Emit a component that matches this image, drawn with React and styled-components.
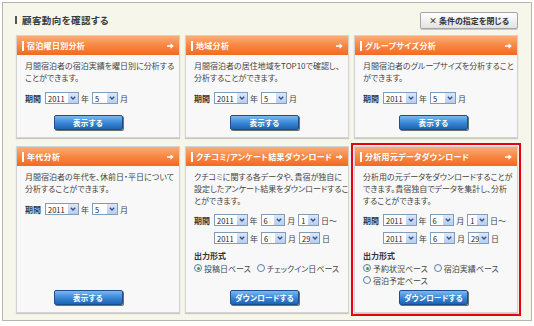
import React from 'react';
import styled, { createGlobalStyle } from 'styled-components';

const Global = createGlobalStyle`
  html, body { margin: 0; padding: 0; background: #ffffff; }
  body {
    font-family: "Noto Sans CJK JP", "Noto Sans", sans-serif;
    color: #333333;
    font-feature-settings: "palt";
  }
`;

const Panel = styled.div`
  box-sizing: border-box;
  margin: 2px;
  width: 530px;
  height: 319px;
  border: 1px solid #b5b5ab;
  background: #f6f6ea;
  padding: 9px 13px 6px 13px;
  display: flex;
  flex-direction: column;
`;

const TopBar = styled.div`
  height: 16px;
  display: flex;
  align-items: center;
  justify-content: space-between;
`;

const Title = styled.h1`
  margin: 0 0 0 -1px;
  display: flex;
  align-items: center;
  gap: 5px;
  font-size: 9.5px;
  font-weight: bold;
  color: #3a3a3a;
  letter-spacing: 0.4px;
  &::before {
    content: "";
    width: 2px;
    height: 8px;
    background: #555555;
  }
`;

const CloseButton = styled.button`
  box-sizing: border-box;
  height: 17px;
  width: 98px;
  padding: 0;
  border: 1px solid #a4a4a4;
  border-radius: 2px;
  background: linear-gradient(#ffffff, #e2e2e2);
  box-shadow: 0 1px 0 #c8c8c8;
  font-family: inherit;
  font-feature-settings: "palt";
  font-size: 8px;
  font-weight: bold;
  color: #333333;
  display: flex;
  align-items: center;
  justify-content: center;
  gap: 2px;
`;

const Grid = styled.div`
  margin-top: 7px;
  display: grid;
  grid-template-columns: 164px 164px 164px;
  grid-template-rows: 103px 167px;
  column-gap: 5px;
  row-gap: 8px;
`;

const Card = styled.section`
  box-sizing: border-box;
  border: 1px solid #d3d3d3;
  background: #f8f8f8;
  box-shadow: 0 1px 1px rgba(0, 0, 0, 0.18);
  display: flex;
  flex-direction: column;
  min-height: 0;
  ${p => p.$highlight && `
    outline: 2px solid #e60012;
    outline-offset: 1px;
  `}
`;

const CardHeader = styled.header`
  height: 19px;
  flex: none;
  display: flex;
  align-items: center;
  padding: 0 5px 0 5px;
  background: linear-gradient(#fbae78 0%, #f78b48 45%, #f26a20 100%);
  color: #ffffff;
  font-size: 8px;
  font-weight: bold;
  letter-spacing: 0.3px;
  &::before {
    content: "";
    width: 2px;
    height: 10px;
    background: #ffffff;
    margin-right: 3px;
  }
`;

const HeaderText = styled.span`
  flex: 1;
  white-space: nowrap;
`;

const CardBody = styled.div`
  flex: 1;
  display: flex;
  flex-direction: column;
  padding: 5px 8px 7px 8px;
  min-height: 0;
`;

const Desc = styled.p`
  margin: 0;
  font-size: 8px;
  line-height: 12px;
  color: #444444;
  white-space: nowrap;
`;

const PeriodRow = styled.div`
  display: flex;
  align-items: center;
  height: 12px;
  margin-top: ${p => p.$mt}px;
  padding-left: ${p => (p.$indent ? 20 : 0)}px;
  font-size: 8px;
  color: #444444;
  white-space: nowrap;
`;

const PeriodLabel = styled.span`
  width: 16px;
  margin-right: 4px;
  font-weight: bold;
  color: #333333;
`;

const SelectBox = styled.span`
  box-sizing: border-box;
  width: ${p => p.$w}px;
  height: 12px;
  border: 1px solid #7f9db9;
  background: #ffffff;
  display: flex;
  align-items: center;
  font-size: 7.5px;
  color: #222222;
`;

const SelectValue = styled.span`
  flex: 1;
  padding-left: 2px;
`;

const SelectArrow = styled.span`
  width: 10px;
  height: 10px;
  background: linear-gradient(#dbe6fa, #b9cdf1);
  display: flex;
  align-items: center;
  justify-content: center;
`;

const Unit = styled.span`
  margin: 0 3px 0 2px;
`;

const SubTitle = styled.div`
  margin-top: 6px;
  font-size: 8px;
  line-height: 12px;
  font-weight: bold;
  color: #333333;
`;

const RadioLine = styled.div`
  display: flex;
  align-items: center;
  gap: 6px;
  height: 12px;
  font-size: 8px;
  color: #444444;
  white-space: nowrap;
`;

const RadioItem = styled.span`
  display: flex;
  align-items: center;
  gap: 2px;
`;

const RadioCircle = styled.span`
  box-sizing: border-box;
  width: 8px;
  height: 8px;
  border-radius: 50%;
  border: 1px solid #5f7fa6;
  background: linear-gradient(#e8ecf2, #ffffff);
  display: flex;
  align-items: center;
  justify-content: center;
  &::after {
    content: "";
    width: 3px;
    height: 3px;
    border-radius: 50%;
    background: ${p => (p.$checked ? '#3f9b36' : 'transparent')};
  }
`;

const ActionButton = styled.button`
  box-sizing: border-box;
  margin-top: auto;
  align-self: center;
  margin-right: ${p => p.$shift}px;
  width: 69px;
  height: 15px;
  padding: 0;
  border: 1px solid #1d4f8c;
  border-radius: 2px;
  background: linear-gradient(#7bb9ee 0%, #3d8ad6 50%, #1c63b6 100%);
  box-shadow: 1px 1px 0 #6f6f6f;
  color: #ffffff;
  font-family: inherit;
  font-feature-settings: "palt";
  font-size: 7.5px;
  font-weight: bold;
  letter-spacing: 0.3px;
`;

const HeadArrow = () => (
  <svg width="7" height="6" viewBox="0 0 7 6">
    <path d="M0 2.2 H3.5 V0.3 L6.8 3 L3.5 5.7 V3.8 H0 Z" fill="#ffffff" />
  </svg>
);

const Chevron = () => (
  <svg width="6" height="4" viewBox="0 0 6 4">
    <path d="M0.8 0.8 L3 3 L5.2 0.8" fill="none" stroke="#2f4f86" strokeWidth="1.3" />
  </svg>
);

const Select = ({ value, w }) => (
  <SelectBox $w={w}>
    <SelectValue>{value}</SelectValue>
    <SelectArrow><Chevron /></SelectArrow>
  </SelectBox>
);

const MonthRow = ({ mt }) => (
  <PeriodRow $mt={mt}>
    <PeriodLabel>期間</PeriodLabel>
    <Select value="2011" w={34} />
    <Unit>年</Unit>
    <Select value="5" w={26} />
    <Unit>月</Unit>
  </PeriodRow>
);

const RangeRows = () => (
  <>
    <PeriodRow $mt={7}>
      <PeriodLabel>期間</PeriodLabel>
      <Select value="2011" w={34} />
      <Unit>年</Unit>
      <Select value="6" w={25} />
      <Unit>月</Unit>
      <Select value="1" w={21} />
      <Unit>日〜</Unit>
    </PeriodRow>
    <PeriodRow $mt={6} $indent>
      <Select value="2011" w={34} />
      <Unit>年</Unit>
      <Select value="6" w={25} />
      <Unit>月</Unit>
      <Select value="29" w={21} />
      <Unit>日</Unit>
    </PeriodRow>
  </>
);

const Radio = ({ label, checked }) => (
  <RadioItem>
    <RadioCircle $checked={checked} />
    {label}
  </RadioItem>
);

const Lines = ({ lines }) => (
  <Desc>
    {lines.map((l, i) => (
      <React.Fragment key={i}>
        {l}
        {i < lines.length - 1 && <br />}
      </React.Fragment>
    ))}
  </Desc>
);

const SimpleCard = ({ title, lines, shift }) => (
  <Card>
    <CardHeader>
      <HeaderText>{title}</HeaderText>
      <HeadArrow />
    </CardHeader>
    <CardBody>
      <Lines lines={lines} />
      <MonthRow mt={8} />
      <ActionButton $shift={shift}>表示する</ActionButton>
    </CardBody>
  </Card>
);

export default function App() {
  return (
    <>
      <Global />
      <Panel>
        <TopBar>
          <Title>顧客動向を確認する</Title>
          <CloseButton><span>×</span>条件の指定を閉じる</CloseButton>
        </TopBar>
        <Grid>
          <SimpleCard
            title="宿泊曜日別分析"
            lines={['月間宿泊者の宿泊実績を曜日別に分析する', 'ことができます。']}
            shift={20}
          />
          <SimpleCard
            title="地域分析"
            lines={['月間宿泊者の居住地域をTOP10で確認し、', '分析することができます。']}
            shift={5}
          />
          <SimpleCard
            title="グループサイズ分析"
            lines={['月間宿泊者のグループサイズを分析すること', 'ができます。']}
            shift={5}
          />
          <SimpleCard
            title="年代分析"
            lines={['月間宿泊者の年代を、休前日・平日について', '分析することができます。']}
            shift={20}
          />
          <Card>
            <CardHeader>
              <HeaderText>クチコミ/アンケート結果ダウンロード</HeaderText>
              <HeadArrow />
            </CardHeader>
            <CardBody>
              <Lines
                lines={[
                  'クチコミに関する各データや、貴宿が独自に',
                  '設定したアンケート結果をダウンロードするこ',
                  'とができます。',
                ]}
              />
              <RangeRows />
              <SubTitle>出力形式</SubTitle>
              <RadioLine>
                <Radio label="投稿日ベース" checked />
                <Radio label="チェックイン日ベース" />
              </RadioLine>
              <ActionButton $shift={5}>ダウンロードする</ActionButton>
            </CardBody>
          </Card>
          <Card $highlight>
            <CardHeader>
              <HeaderText>分析用元データダウンロード</HeaderText>
              <HeadArrow />
            </CardHeader>
            <CardBody>
              <Lines
                lines={[
                  '分析用の元データをダウンロードすることが',
                  'できます。貴宿独自でデータを集計し、分析',
                  'することができます。',
                ]}
              />
              <RangeRows />
              <SubTitle>出力形式</SubTitle>
              <RadioLine>
                <Radio label="予約状況ベース" checked />
                <Radio label="宿泊実績ベース" />
              </RadioLine>
              <RadioLine>
                <Radio label="宿泊予定ベース" />
              </RadioLine>
              <ActionButton $shift={5}>ダウンロードする</ActionButton>
            </CardBody>
          </Card>
        </Grid>
      </Panel>
    </>
  );
}
